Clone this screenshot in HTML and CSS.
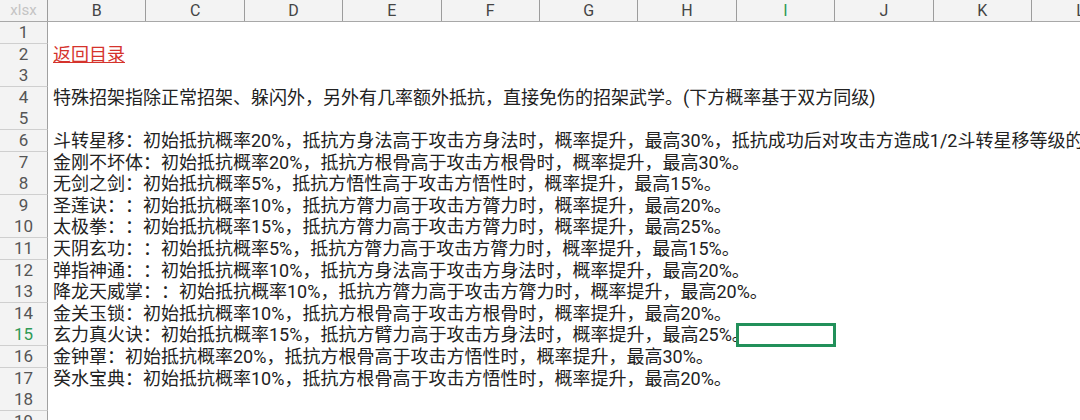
FILE: index.html
```html
<!DOCTYPE html>
<html lang="zh-CN">
<head>
    <meta charset="UTF-8">
    <meta name="viewport" content="width=device-width, initial-scale=1.0">
    <title>特殊招架</title>
    <link rel="stylesheet" href="styles.css">
</head>
<body>
    <div class="sheet">
        <!-- column headers -->
        <div class="colhead">
            <div class="corner">xlsx</div>
            <div class="col">B</div>
            <div class="col">C</div>
            <div class="col">D</div>
            <div class="col">E</div>
            <div class="col">F</div>
            <div class="col">G</div>
            <div class="col">H</div>
            <div class="col active">I</div>
            <div class="col">J</div>
            <div class="col">K</div>
            <div class="col">L</div>
        </div>

        <div class="row"><div class="num">1</div></div>
        <div class="row"><div class="num">2</div><div class="cell"><a class="link" href="#">返回目录</a></div></div>
        <div class="row"><div class="num">3</div></div>
        <div class="row"><div class="num">4</div><div class="cell">特殊招架指除正常招架、躲闪外，另外有几率额外抵抗，直接免伤的招架武学。(下方概率基于双方同级)</div></div>
        <div class="row"><div class="num">5</div></div>
        <div class="row"><div class="num">6</div><div class="cell">斗转星移：初始抵抗概率20%，抵抗方身法高于攻击方身法时，概率提升，最高30%，抵抗成功后对攻击方造成1/2斗转星移等级的伤害。</div></div>
        <div class="row"><div class="num">7</div><div class="cell">金刚不坏体：初始抵抗概率20%，抵抗方根骨高于攻击方根骨时，概率提升，最高30%。</div></div>
        <div class="row"><div class="num">8</div><div class="cell">无剑之剑：初始抵抗概率5%，抵抗方悟性高于攻击方悟性时，概率提升，最高15%。</div></div>
        <div class="row"><div class="num">9</div><div class="cell">圣莲诀：：初始抵抗概率10%，抵抗方膂力高于攻击方膂力时，概率提升，最高20%。</div></div>
        <div class="row"><div class="num">10</div><div class="cell">太极拳：：初始抵抗概率15%，抵抗方膂力高于攻击方膂力时，概率提升，最高25%。</div></div>
        <div class="row"><div class="num">11</div><div class="cell">天阴玄功：：初始抵抗概率5%，抵抗方膂力高于攻击方膂力时，概率提升，最高15%。</div></div>
        <div class="row"><div class="num">12</div><div class="cell">弹指神通：：初始抵抗概率10%，抵抗方身法高于攻击方身法时，概率提升，最高20%。</div></div>
        <div class="row"><div class="num">13</div><div class="cell">降龙天威掌：：初始抵抗概率10%，抵抗方膂力高于攻击方膂力时，概率提升，最高20%。</div></div>
        <div class="row"><div class="num">14</div><div class="cell">金关玉锁：初始抵抗概率10%，抵抗方根骨高于攻击方根骨时，概率提升，最高20%。</div></div>
        <div class="row"><div class="num active">15</div><div class="cell">玄力真火诀：初始抵抗概率15%，抵抗方臂力高于攻击方身法时，概率提升，最高25%。</div><div class="cell selected"></div></div>
        <div class="row"><div class="num">16</div><div class="cell">金钟罩：初始抵抗概率20%，抵抗方根骨高于攻击方悟性时，概率提升，最高30%。</div></div>
        <div class="row"><div class="num">17</div><div class="cell">癸水宝典：初始抵抗概率10%，抵抗方根骨高于攻击方悟性时，概率提升，最高20%。</div></div>
        <div class="row"><div class="num">18</div></div>
        <div class="row"><div class="num">19</div></div>
    </div>
</body>
</html>
```

FILE: styles.css
```css
body {
    margin: 0;
    background: #ffffff;
    font-family: Roboto, "Noto Sans CJK SC", sans-serif;
    color: #222222;
    overflow: hidden;
}
.sheet {
    width: 1080px;
    height: 420px;
    overflow: hidden;
}
.colhead, .row {
    display: grid;
    grid-template-columns: 48px repeat(11, 98.4px);
}
.colhead {
    height: 22px;
    background: #f3f3f3;
    border-bottom: 1px solid #a8a8a8;
    box-sizing: border-box;
}
.corner, .col {
    font-size: 16px;
    line-height: 21px;
    text-align: center;
    color: #444444;
    border-right: 1px solid #9c9c9c;
}
.corner {
    color: #c4c4c4;
    font-size: 15px;
}
.col.active, .num.active {
    color: #2f9a55;
}
.row {
    height: 21.6px;
}
.num {
    background: #f3f3f3;
    border-right: 1px solid #a0a0a0;
    border-bottom: 1px solid #cfcfcf;
    box-sizing: border-box;
    font-size: 17px;
    line-height: 21px;
    text-align: center;
    color: #555555;
}
/* cell text runs on over the empty cells to its right */
.cell {
    grid-column: 2;
    font-size: 18px;
    line-height: 21.6px;
    padding-left: 5px;
    white-space: nowrap;
    overflow: visible;
    text-spacing-trim: space-all;
    font-feature-settings: "palt" 0, "halt" 0;
}
.link {
    color: #d5332c;
    text-decoration: underline;
}
.cell.selected {
    grid-column: 9;
    padding: 0;
    outline: 3px solid #22905a;
    outline-offset: -2px;
}
```
